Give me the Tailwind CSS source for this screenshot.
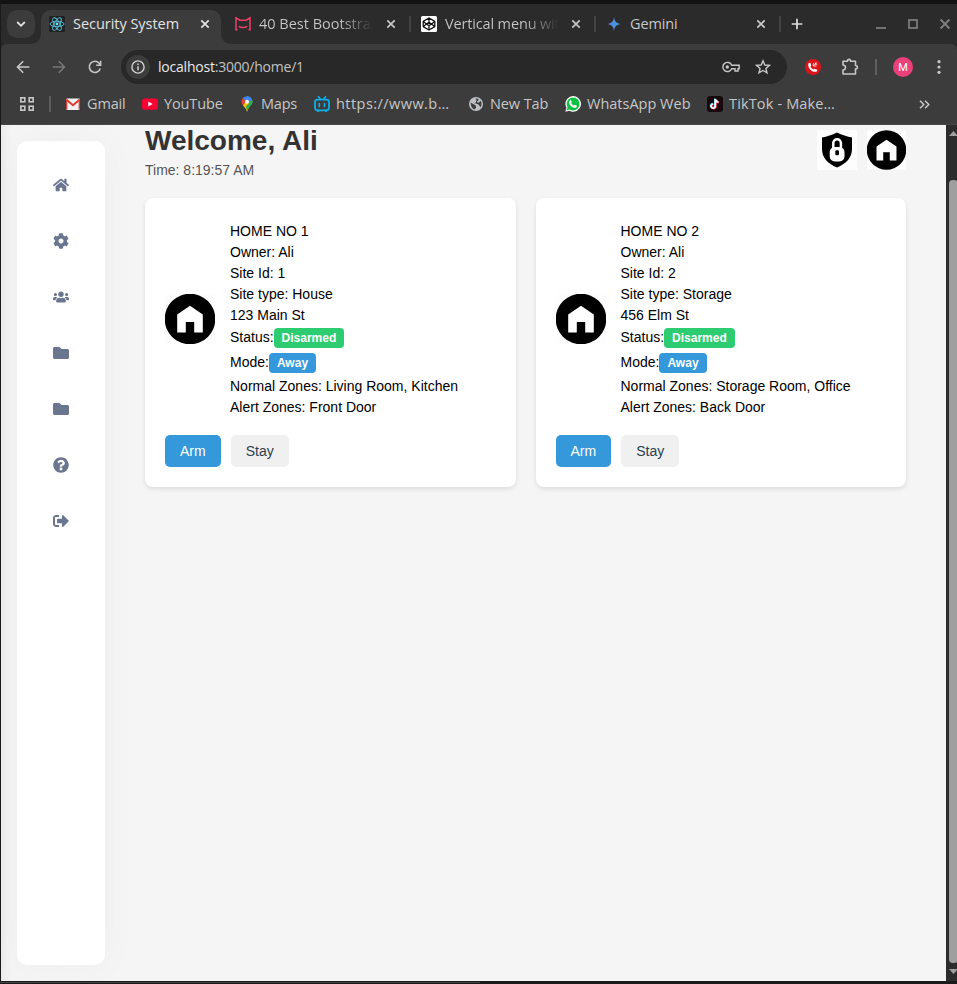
<!DOCTYPE html>
<html lang="en">
<head>
<meta charset="utf-8">
<title>Security System</title>
<script src="https://cdn.jsdelivr.net/npm/@tailwindcss/browser@4"></script>
</head>
<body class="w-[957px] h-[984px] overflow-hidden bg-[#1a1a1a] font-['Liberation_Sans',Arial,sans-serif]">
<svg class="hidden">
  <symbol id="house" viewBox="0 0 50 50"><rect width="50" height="50" fill="#fdfdfd"/><circle cx="25" cy="25" r="25.3" fill="#000"/><path d="M25 11.700 37.800 20.600V38.600H29.200V28H20.800V38.600H12.200V20.600Z" fill="#fff"/></symbol>
  <symbol id="x" viewBox="0 0 10 10"><path d="M1.300 1.300 8.700 8.700M8.700 1.300 1.300 8.700" stroke="currentColor" stroke-width="1.700" fill="none"/></symbol>
  <symbol id="folder" viewBox="0 0 512 512"><path fill="currentColor" d="M464 128H272l-64-64H48C21.500 64 0 85.500 0 112v288c0 26.500 21.500 48 48 48h416c26.500 0 48-21.500 48-48V176c0-26.500-21.500-48-48-48z"/></symbol>
</svg>
<div class="flex flex-col h-full">
  <div class="h-1 bg-[#131313] shrink-0"></div>
  <!-- Tab strip -->
  <div class="flex h-10 bg-[#2b2b2b] text-[#c7c7c7] font-['Open_Sans','Noto_Sans',sans-serif] text-[14.5px] shrink-0 ml-px">
    <div class="w-7 h-7 ml-[6px] mt-[6px] rounded-[10px] bg-[#3c3c3c] flex items-center justify-center">
      <svg class="w-[10px] h-[10px]" viewBox="0 0 10 10"><path d="M1.200 3 5 6.800 8.800 3" fill="none" stroke="#e3e3e3" stroke-width="1.800"/></svg>
    </div>
    <svg class="w-[10px] h-[10px] self-end -ml-[4px]" viewBox="0 0 10 10"><path d="M10 0V10H0A10 10 0 0 0 10 0Z" fill="#3c3c3c"/></svg>
    <div class="w-[180px] h-[34px] mt-[6px] rounded-t-[10px] bg-[#3c3c3c] flex items-center pl-2 pr-[11px] pb-[6px] text-[#e3e3e3]">
      <svg class="w-4 h-4 shrink-0" viewBox="0 0 16 16"><rect width="16" height="16" rx="1.500" fill="#222"/><g fill="none" stroke="#58c4dc" stroke-width=".9"><ellipse cx="8" cy="8" rx="7" ry="2.700"/><ellipse cx="8" cy="8" rx="7" ry="2.700" transform="rotate(60 8 8)"/><ellipse cx="8" cy="8" rx="7" ry="2.700" transform="rotate(120 8 8)"/></g><circle cx="8" cy="8" r="1.400" fill="#7adcf2"/></svg>
      <span class="ml-2 whitespace-nowrap flex-1 tracking-[-0.03px]">Security System</span>
      <svg class="w-[10px] h-[10px] shrink-0"><use href="#x"/></svg>
    </div>
    <svg class="w-[10px] h-[10px] self-end" viewBox="0 0 10 10"><path d="M0 0V10H10A10 10 0 0 1 0 0Z" fill="#3c3c3c"/></svg>
    <div class="flex items-center h-10 w-[180px] pl-1">
      <svg class="w-4 h-4 shrink-0" viewBox="0 0 16 16"><path d="M2.500 13.700H1V1.800L4.800 4.200H11.200L15 1.800V13.700H13.500M3.800 10.300C6 12 10 12 12.200 10.300" fill="none" stroke="#ee3f67" stroke-width="1.500"/></svg>
      <span class="ml-2 w-[114px] whitespace-nowrap overflow-hidden shrink-0 bg-linear-to-r from-[#c7c7c7] from-70% to-transparent bg-clip-text text-transparent tracking-[0px]">40 Best Bootstrap</span>
      <svg class="w-[10px] h-[10px] ml-[13px] shrink-0"><use href="#x"/></svg>
      <div class="w-[2px] h-4 bg-[#444] ml-[13px] shrink-0"></div>
    </div>
    <div class="flex items-center h-10 w-[185px] pl-[10px]">
      <svg class="w-4 h-4 shrink-0" viewBox="0 0 16 16"><rect width="16" height="16" rx="1.500" fill="#fff"/><path d="M8 2 13.800 5.400V10.600L8 14 2.200 10.600V5.400ZM8 2V5.700M8 10.300V14M2.200 5.400 8 9.800 13.800 5.400M2.200 10.600 8 6.200 13.800 10.600" fill="none" stroke="#111" stroke-width="1.300" stroke-linejoin="round"/></svg>
      <span class="ml-2 w-[114px] whitespace-nowrap overflow-hidden shrink-0 bg-linear-to-r from-[#c7c7c7] from-70% to-transparent bg-clip-text text-transparent tracking-[-0.15px]">Vertical menu with</span>
      <svg class="w-[10px] h-[10px] ml-[12px] shrink-0"><use href="#x"/></svg>
      <div class="w-[2px] h-4 bg-[#444] ml-[13px] shrink-0"></div>
    </div>
    <div class="flex items-center h-10 w-[186px] pl-[10px]">
      <svg class="w-4 h-4 shrink-0" viewBox="0 0 16 16"><defs><linearGradient id="gm"><stop stop-color="#7b72c9"/><stop offset=".5" stop-color="#4c8fe0"/><stop offset="1" stop-color="#35a5dc"/></linearGradient></defs><path d="M8 1C8.600 5.500 10.500 7.400 15 8 10.500 8.600 8.600 10.500 8 15 7.400 10.500 5.500 8.600 1 8 5.500 7.400 7.400 5.500 8 1Z" fill="url(#gm)"/></svg>
      <span class="ml-2 w-[126px] shrink-0 tracking-[-0.15px]">Gemini</span>
      <svg class="w-[10px] h-[10px] shrink-0"><use href="#x"/></svg>
      <div class="w-[2px] h-4 bg-[#444] ml-[13px] shrink-0"></div>
    </div>
    <svg class="w-[12px] h-[12px] self-center ml-[9px]" viewBox="0 0 12 12"><path d="M6 .7V11.300M.7 6H11.300" stroke="#dedede" stroke-width="1.700"/></svg>
    <div class="flex items-center ml-auto text-[#7b7b7b] pr-[6px] gap-[21px]">
      <svg class="w-[11px] h-[10px]" viewBox="0 0 11 10"><path d="M0 9H10" stroke="currentColor" stroke-width="1.800"/></svg>
      <svg class="w-[10px] h-[10px]" viewBox="0 0 10 10"><rect x="1" y="1" width="8" height="8" fill="none" stroke="currentColor" stroke-width="1.800"/></svg>
      <svg class="w-[12px] h-[12px]"><use href="#x"/></svg>
    </div>
  </div>

  <!-- Toolbar -->
  <div class="ml-px bg-[#2b2b2b] shrink-0">
  <div class="flex items-center h-[46px] bg-[#3c3c3c] rounded-t-[6px] text-[#c7c7c7] pl-[15px]">
    <svg class="w-[14px] h-[14px]" viewBox="0 0 14 14"><path d="M13.300 7H2M7.200 1.300 1.500 7 7.200 12.700" fill="none" stroke="#c7c7c7" stroke-width="1.600"/></svg>
    <svg class="w-[14px] h-[14px] ml-[22px]" viewBox="0 0 14 14"><path d="M.7 7H12M6.800 1.300 12.500 7 6.800 12.700" fill="none" stroke="#777" stroke-width="1.600"/></svg>
    <svg class="w-[14px] h-[14px] ml-[22px]" viewBox="0 0 14 14"><path d="M12.300 8.500A5.600 5.600 0 1 1 11.200 3.200L12.500 4.600" fill="none" stroke="#c7c7c7" stroke-width="1.600"/><path d="M12.600.8V5.200H8.200" fill="none" stroke="#c7c7c7" stroke-width="1.600"/></svg>
    <div class="flex items-center w-[666px] h-[34px] rounded-full bg-[#282828] ml-[19px] pl-[5px] pr-4">
      <div class="w-6 h-6 rounded-full bg-[#3c3c3c] flex items-center justify-center">
        <svg class="w-[14px] h-[14px]" viewBox="0 0 14 14"><circle cx="7" cy="7" r="6.100" fill="none" stroke="#d0d0d0" stroke-width="1.400"/><path d="M7 6.300V10.300M7 3.500V5" stroke="#d0d0d0" stroke-width="1.500"/></svg>
      </div>
      <span class="ml-2 pb-[2px] font-['Open_Sans','Noto_Sans',sans-serif] text-[14px] tracking-[-0.22px] flex-1 text-[#c2c2c2]"><span class="text-[#e8e8e8]">localhost</span>:3000/home/1</span>
      <svg class="w-[18px] h-[12px]" viewBox="0 0 18 12"><path d="M9.700 4.200A4.600 4.600 0 1 0 9.700 7.800H13V10H16V7.800H17.200V4.200Z" fill="none" stroke="#c7c7c7" stroke-width="1.400"/><circle cx="5.300" cy="6" r="1.700" fill="#c7c7c7"/></svg>
      <svg class="w-4 h-4 ml-[15px]" viewBox="0 0 16 16"><path d="M8 1.800 9.800 6 14.400 6.400 10.900 9.400 12 13.900 8 11.500 4 13.900 5.100 9.400 1.600 6.400 6.200 6Z" fill="none" stroke="#c7c7c7" stroke-width="1.400"/></svg>
    </div>
    <svg class="w-4 h-4 ml-[18px]" viewBox="0 0 16 16"><circle cx="8" cy="8" r="8" fill="#dd1319"/><path d="M3.300 4.700C4 3.300 5.300 3.500 5.700 4.500L6.200 6C6.400 6.700 5.600 7 5.600 7.400 6 8.800 7.200 10 8.600 10.500 9 10.500 9.300 9.700 10 9.900L11.700 10.600C12.600 11.200 12.200 12.300 11.200 12.700 7 13.700 2.500 9 3.300 4.700Z" fill="#fff"/><path d="M8.300 4V7H11.500M8.500 6.800 11.800 3.500M10.200 3.500V5.200H12.300" fill="none" stroke="#fff" stroke-width=".8"/></svg>
    <svg class="w-[18px] h-[18px] ml-5" viewBox="0 0 18 18"><path d="M2 3.200H6.500Q6.500 1.400 8 1.400T9.500 3.200H14.500V7.500Q16.400 7.500 16.400 9.200T14.500 10.900V16H2V12Q4.500 11.800 4.500 9.500T2 7Z" fill="none" stroke="#c7c7c7" stroke-width="1.600" stroke-linejoin="round"/></svg>
    <div class="w-[2px] h-4 bg-[#606060] ml-[16px]"></div>
    <div class="w-5 h-5 rounded-full bg-[#ec407a] ml-[16px] text-white text-[11px] leading-5 pt-px flex items-center justify-center font-['Roboto',sans-serif]">M</div>
    <svg class="w-1 h-[14px] ml-6" viewBox="0 0 4 14"><g fill="#c7c7c7"><circle cx="2" cy="1.700" r="1.600"/><circle cx="2" cy="7" r="1.600"/><circle cx="2" cy="12.300" r="1.600"/></g></svg>
  </div>
  </div>

  <!-- Bookmarks -->
  <div class="flex items-center h-[35px] bg-[#3c3c3c] border-b border-[#484848] ml-px pl-[19px] pb-[6px] text-[#c7c7c7] font-['Open_Sans','Noto_Sans',sans-serif] text-[14.5px] whitespace-nowrap shrink-0">
    <svg class="w-[14px] h-[14px] shrink-0" viewBox="0 0 14 14"><g fill="none" stroke="#c7c7c7" stroke-width="1.600"><rect x=".8" y=".8" width="4" height="4"/><rect x="9.200" y=".8" width="4" height="4"/><rect x=".8" y="9.200" width="4" height="4"/><rect x="9.200" y="9.200" width="4" height="4"/></g></svg>
    <div class="w-[2px] h-4 bg-[#5c5c5c] ml-[15px] shrink-0"></div>
    <svg class="w-4 h-4 ml-[14px] shrink-0" viewBox="0 0 16 16"><rect x="1" y="2.500" width="14" height="11.500" rx="1.200" fill="#f1f1f1"/><path d="M1.200 3.500 8 9.200 14.800 3.500" fill="none" stroke="#d93a30" stroke-width="2"/><path d="M1.700 13.500V4M14.300 13.500V4" stroke="#d93a30" stroke-width="1.300"/></svg>
    <span class="w-[55px] pl-[6px] shrink-0 tracking-[-0.15px]">Gmail</span>
    <svg class="w-4 h-4 ml-[6px] -mr-px shrink-0" viewBox="0 0 16 16"><rect y="2.500" width="16" height="11.200" rx="2.800" fill="#ff0033"/><path d="M6.300 5.600V10.600L10.600 8.100Z" fill="#fff"/></svg>
    <span class="w-[76px] pl-[7px] shrink-0 tracking-[-0.12px]">YouTube</span>
    <svg class="w-4 h-4 ml-[6px] shrink-0" viewBox="0 0 16 16"><path d="M8 .3A5.500 5.500 0 0 1 13.500 5.800C13.500 9.300 9.300 10.500 8 15.800Z" fill="#34a853"/><path d="M8 15.800C7.300 12.500 5 11 3.800 9L9 3.500 11.500 7.500Z" fill="#fbbc04"/><path d="M8 15.800C9.300 10.500 13.500 9.300 13.500 5.800A5.500 5.500 0 0 0 13 3.500L7 10.500Z" fill="#34a853"/><path d="M3.800 9A5.500 5.500 0 0 1 3.700 2.300L6.500 4.800V6Z" fill="#ea4335"/><path d="M3.700 2.300A5.500 5.500 0 0 1 13 3.500L9.500 7 6.500 4.700Z" fill="#4285f4"/><circle cx="8" cy="5.800" r="2" fill="#fff"/></svg>
    <span class="w-[59px] pl-[6px] shrink-0 tracking-[-0.2px]">Maps</span>
    <svg class="w-4 h-4 shrink-0" viewBox="0 0 16 16"><rect x="1" y="3.700" width="14" height="10.600" rx="2.500" fill="none" stroke="#0eaee8" stroke-width="1.800"/><path d="M4.500.8 6.500 3.200M11.500.8 9.500 3.200M5.300 7.500V10.500M10.500 7.500V10.500M4 14V15.500M12 14V15.500" stroke="#0eaee8" stroke-width="1.700" stroke-linecap="round"/></svg>
    <span class="w-[131px] pl-[6px] shrink-0 tracking-[0.45px]">https://www.b…</span>
    <svg class="w-[14px] h-[14px] ml-[8px] shrink-0" viewBox="0 0 14 14"><circle cx="7" cy="7" r="7" fill="#bdc1c6"/><path d="M1.700 5.500 5 7.500 7 8.700V10.700L5.500 12.500C3 11.500 1.500 9 1.700 5.500ZM6.500 1.500 9.500 1.800 9.200 4H7V5.500L5 6.300 7 6.500 9.500 7.500 11.500 10.300C13 8 12.800 5.500 11.500 3.800L10 5.500H8.500" fill="#3c3c3c"/></svg>
    <span class="w-[73px] pl-[7px] shrink-0 tracking-[-0.1px]">New Tab</span>
    <svg class="w-4 h-4 ml-[9px] shrink-0" viewBox="0 0 16 16"><path d="M.3 15.700 1.400 11.700A7.800 7.800 0 1 1 4.400 14.700Z" fill="#fff"/><circle cx="8.100" cy="7.900" r="6.500" fill="#0dc143"/><path d="M1.600 14.300 2.600 11 5 13.500Z" fill="#0dc143"/><path d="M5.200 4.300C5.900 3.900 6.200 4.200 6.800 5.900L6.200 7C6.900 8.300 7.800 9.100 9 9.600L9.900 8.700C11.500 9.300 12.100 9.600 11.900 10.200 11.500 11.600 10 12.200 8.500 11.600 6.500 10.800 4.800 9.200 4.200 7.200 4 6 4.300 4.900 5.200 4.300Z" fill="#fff"/></svg>
    <span class="w-[120px] pl-[6px] shrink-0">WhatsApp Web</span>
    <svg class="w-4 h-4 ml-[6px] shrink-0" viewBox="0 0 16 16"><rect width="16" height="16" rx="3" fill="#17080e"/><g fill="none" stroke-width="1.700"><path d="M8.300 3V10A2.100 2.100 0 1 1 6.200 8M8.300 3.200C8.700 5 9.800 5.900 11.500 6" stroke="#25d9e3" transform="translate(-.5 -.4)"/><path d="M8.300 3V10A2.100 2.100 0 1 1 6.200 8M8.300 3.200C8.700 5 9.800 5.900 11.500 6" stroke="#fe2c55" transform="translate(.6 .5)"/><path d="M8.300 3V10A2.100 2.100 0 1 1 6.200 8M8.300 3.200C8.700 5 9.800 5.900 11.500 6" stroke="#fff"/></g></svg>
    <span class="pl-[6px] shrink-0 tracking-[0.15px]">TikTok - Make…</span>
    <svg class="w-[11px] h-[9px] ml-auto mr-[27px] shrink-0" viewBox="0 0 11 9"><path d="M1 .7 4.800 4.500 1 8.300M6 .7 9.800 4.500 6 8.300" fill="none" stroke="#c7c7c7" stroke-width="1.500"/></svg>
  </div>

  <!-- Page viewport -->
  <div class="flex h-[856px] ml-px shrink-0">
    <div class="flex w-[945px] bg-[#f5f5f5] overflow-hidden pl-4 pt-4 shadow-[inset_12px_0_12px_-10px_rgba(0,0,0,0.07)]">
      <nav class="w-[88px] h-[824px] bg-white rounded-[10px] shadow-[0_0_40px_rgba(0,0,0,0.035)] flex flex-col items-center gap-10 pt-9 text-[#6a7690] shrink-0">
        <svg class="w-4 h-4" viewBox="0 0 576 512"><path fill="currentColor" d="M280.370 148.260L96 300.110V464a16 16 0 0 0 16 16l112.060-.290a16 16 0 0 0 15.920-16V368a16 16 0 0 1 16-16h64a16 16 0 0 1 16 16v95.640a16 16 0 0 0 16 16.050L464 480a16 16 0 0 0 16-16V300L295.670 148.260a12.190 12.190 0 0 0-15.300 0zM571.600 251.470L488 182.560V44.050a12 12 0 0 0-12-12h-56a12 12 0 0 0-12 12v72.610L318.470 43a48 48 0 0 0-61 0L4.340 251.470a12 12 0 0 0-1.600 16.900l25.500 31A12 12 0 0 0 45.150 301l235.220-193.740a12.190 12.190 0 0 1 15.300 0L530.900 301a12 12 0 0 0 16.900-1.600l25.500-31a12 12 0 0 0-1.700-16.930z"/></svg>
        <svg class="w-4 h-4" viewBox="0 0 512 512"><path fill="currentColor" d="M487.400 315.700l-42.600-24.600c4.300-23.200 4.300-47 0-70.200l42.600-24.600c4.900-2.800 7.100-8.600 5.500-14-11.100-35.600-30-67.800-54.700-94.600-3.800-4.100-10-5.100-14.800-2.300L380.800 110c-17.900-15.400-38.500-27.300-60.800-35.100V25.800c0-5.600-3.900-10.500-9.400-11.700-36.700-8.200-74.300-7.800-109.200 0-5.500 1.200-9.400 6.100-9.400 11.700V75c-22.200 7.900-42.800 19.800-60.800 35.100L88.700 85.500c-4.900-2.800-11-1.900-14.800 2.300-24.700 26.700-43.600 58.900-54.700 94.600-1.700 5.400.6 11.200 5.500 14L67.300 221c-4.300 23.200-4.300 47 0 70.200l-42.600 24.600c-4.900 2.800-7.100 8.600-5.500 14 11.100 35.600 30 67.800 54.700 94.600 3.800 4.100 10 5.100 14.800 2.300l42.600-24.600c17.900 15.400 38.500 27.300 60.800 35.100v49.200c0 5.600 3.900 10.500 9.400 11.700 36.700 8.200 74.300 7.800 109.200 0 5.500-1.200 9.400-6.100 9.400-11.700v-49.200c22.200-7.900 42.800-19.800 60.800-35.100l42.600 24.600c4.900 2.800 11 1.900 14.800-2.300 24.700-26.700 43.600-58.900 54.700-94.600 1.500-5.500-.7-11.300-5.600-14.100zM256 336c-44.100 0-80-35.900-80-80s35.900-80 80-80 80 35.900 80 80-35.900 80-80 80z"/></svg>
        <svg class="w-4 h-4" viewBox="0 0 640 512"><path fill="currentColor" d="M96 224c35.300 0 64-28.700 64-64s-28.700-64-64-64-64 28.700-64 64 28.700 64 64 64zm448 0c35.300 0 64-28.700 64-64s-28.700-64-64-64-64 28.700-64 64 28.700 64 64 64zm32 32h-64c-17.600 0-33.500 7.100-45.100 18.600 40.300 22.100 68.900 62 75.100 109.400h66c17.700 0 32-14.300 32-32v-32c0-35.300-28.700-64-64-64zm-256 0c61.900 0 112-50.100 112-112S381.900 32 320 32 208 82.100 208 144s50.100 112 112 112zm76.800 32h-8.300c-20.800 10-43.900 16-68.500 16s-47.600-6-68.500-16h-8.300C179.600 288 128 339.600 128 403.200V432c0 26.500 21.500 48 48 48h288c26.500 0 48-21.500 48-48v-28.800c0-63.600-51.600-115.200-115.200-115.200zm-223.700-13.400C161.500 263.100 145.600 256 128 256H64c-35.300 0-64 28.700-64 64v32c0 17.700 14.300 32 32 32h65.900c6.300-47.400 34.900-87.300 75.200-109.400z"/></svg>
        <svg class="w-4 h-4"><use href="#folder"/></svg>
        <svg class="w-4 h-4"><use href="#folder"/></svg>
        <svg class="w-4 h-4" viewBox="0 0 512 512"><path fill="currentColor" d="M504 256c0 136.997-111.043 248-248 248S8 392.997 8 256C8 119.083 119.043 8 256 8s248 111.083 248 248zM262.655 90c-54.497 0-89.255 22.957-116.549 63.758-3.536 5.286-2.353 12.415 2.715 16.258l34.699 26.310c5.205 3.947 12.621 3.008 16.665-2.122 17.864-22.658 30.113-35.797 57.303-35.797 20.429 0 45.698 13.148 45.698 32.958 0 14.976-12.363 22.667-32.534 33.976C247.128 238.528 216 254.941 216 296v4c0 6.627 5.373 12 12 12h56c6.627 0 12-5.373 12-12v-1.333c0-28.462 83.186-29.647 83.186-106.667 0-58.002-60.165-102-116.531-102zM256 338c-25.365 0-46 20.635-46 46 0 25.364 20.635 46 46 46s46-20.636 46-46c0-25.365-20.635-46-46-46z"/></svg>
        <svg class="w-4 h-4" viewBox="0 0 512 512"><path fill="currentColor" d="M497 273L329 441c-15 15-41 4.500-41-17v-96H152c-13.300 0-24-10.700-24-24v-96c0-13.300 10.700-24 24-24h136V88c0-21.400 25.900-32 41-17l168 168c9.300 9.400 9.300 24.600 0 34zM192 436v-40c0-6.600-5.400-12-12-12H96c-17.700 0-32-14.300-32-32V160c0-17.700 14.300-32 32-32h84c6.600 0 12-5.400 12-12V76c0-6.600-5.400-12-12-12H96c-53 0-96 43-96 96v192c0 53 43 96 96 96h84c6.600 0 12-5.400 12-12z"/></svg>
      </nav>
      <main class="ml-10 w-[761px] -mt-4 shrink-0">
        <header class="flex justify-between h-[73px]">
          <div>
            <h1 class="text-[28px] leading-8 font-bold text-[#333]">Welcome, Ali</h1>
            <p class="text-[14px] leading-[21px] mt-[3px] text-[#555]">Time: 8:19:57 AM</p>
          </div>
          <div class="flex gap-[10px] pt-[5px]">
            <svg class="w-10 h-10" viewBox="0 0 40 40"><rect width="40" height="40" fill="#fdfdfd"/><path d="M20 2.500C25 5 30 6.500 35 7.500V19C35 27.500 29.500 33.500 20 37.500 10.500 33.500 5 27.500 5 19V7.500C10 6.500 15 5 20 2.500Z" fill="#000"/><rect x="12.700" y="17" width="14.800" height="14.500" rx="5" fill="#fff"/><path d="M16.300 18V13A3.800 3.800 0 0 1 23.900 13V18" fill="none" stroke="#fff" stroke-width="2.500"/><rect x="18.300" y="20.300" width="3.700" height="5" rx="1.200" fill="#000"/></svg>
            <svg class="w-[39px] h-10"><use href="#house" width="39" height="40"/></svg>
          </div>
        </header>
        <section class="grid grid-cols-2 gap-5">
          <article class="bg-white rounded-lg p-5 shadow-[0_2px_5px_rgba(0,0,0,0.1)] h-[289px]">
            <div class="flex items-center gap-[15px] h-[202px]">
              <svg class="w-[50px] h-[50px]"><use href="#house"/></svg>
              <div class="text-[14px] leading-[21px] text-black">
                <p>HOME NO 1</p><p>Owner: Ali</p><p>Site Id: 1</p><p>Site type: House</p><p>123 Main St</p>
                <div class="flex items-center h-[25px]"><span class="pb-[2px]">Status:</span><span class="bg-[#2ecc71] text-white font-bold text-[12px] leading-5 px-2 rounded-[4px]">Disarmed</span></div>
                <div class="flex items-center h-[25px]"><span class="pb-[2px]">Mode:</span><span class="bg-[#3498db] text-white font-bold text-[12px] leading-5 px-2 rounded-[4px]">Away</span></div>
                <p>Normal Zones: Living Room, Kitchen</p><p>Alert Zones: Front Door</p>
              </div>
            </div>
            <div class="flex gap-[10px] mt-[15px] text-[14px] leading-8">
              <button class="bg-[#3498db] text-white px-[15px] rounded-[5px]">Arm</button>
              <button class="bg-[#f0f0f0] text-[#2c3e50] px-[15px] rounded-[5px]">Stay</button>
            </div>
          </article>
          <article class="bg-white rounded-lg p-5 shadow-[0_2px_5px_rgba(0,0,0,0.1)] h-[289px]">
            <div class="flex items-center gap-[15px] h-[202px]">
              <svg class="w-[50px] h-[50px]"><use href="#house"/></svg>
              <div class="text-[14px] leading-[21px] text-black">
                <p>HOME NO 2</p><p>Owner: Ali</p><p>Site Id: 2</p><p>Site type: Storage</p><p>456 Elm St</p>
                <div class="flex items-center h-[25px]"><span class="pb-[2px]">Status:</span><span class="bg-[#2ecc71] text-white font-bold text-[12px] leading-5 px-2 rounded-[4px]">Disarmed</span></div>
                <div class="flex items-center h-[25px]"><span class="pb-[2px]">Mode:</span><span class="bg-[#3498db] text-white font-bold text-[12px] leading-5 px-2 rounded-[4px]">Away</span></div>
                <p>Normal Zones: Storage Room, Office</p><p>Alert Zones: Back Door</p>
              </div>
            </div>
            <div class="flex gap-[10px] mt-[15px] text-[14px] leading-8">
              <button class="bg-[#3498db] text-white px-[15px] rounded-[5px]">Arm</button>
              <button class="bg-[#f0f0f0] text-[#2c3e50] px-[15px] rounded-[5px]">Stay</button>
            </div>
          </article>
        </section>
      </main>
    </div>
    <!-- Scrollbar -->
    <div class="w-[11px] bg-[#2c2c2c] overflow-hidden flex flex-col pl-[3px] pt-[6px]">
      <svg class="w-[9px] h-[5px] shrink-0" viewBox="0 0 9 5"><path d="M4.500 0 9 5H0Z" fill="#9f9f9f"/></svg>
      <div class="w-[9px] h-[783px] mt-[44px] rounded-[4px] bg-[#9f9f9f] shrink-0"></div>
      <svg class="w-[9px] h-[5px] mt-[6px] shrink-0" viewBox="0 0 9 5"><path d="M4.500 5 9 0H0Z" fill="#9f9f9f"/></svg>
    </div>
  </div>
  <div class="h-[3px] pt-px"><div class="w-[480px] h-px bg-[#444]"></div></div>
</div>
</body>
</html>
